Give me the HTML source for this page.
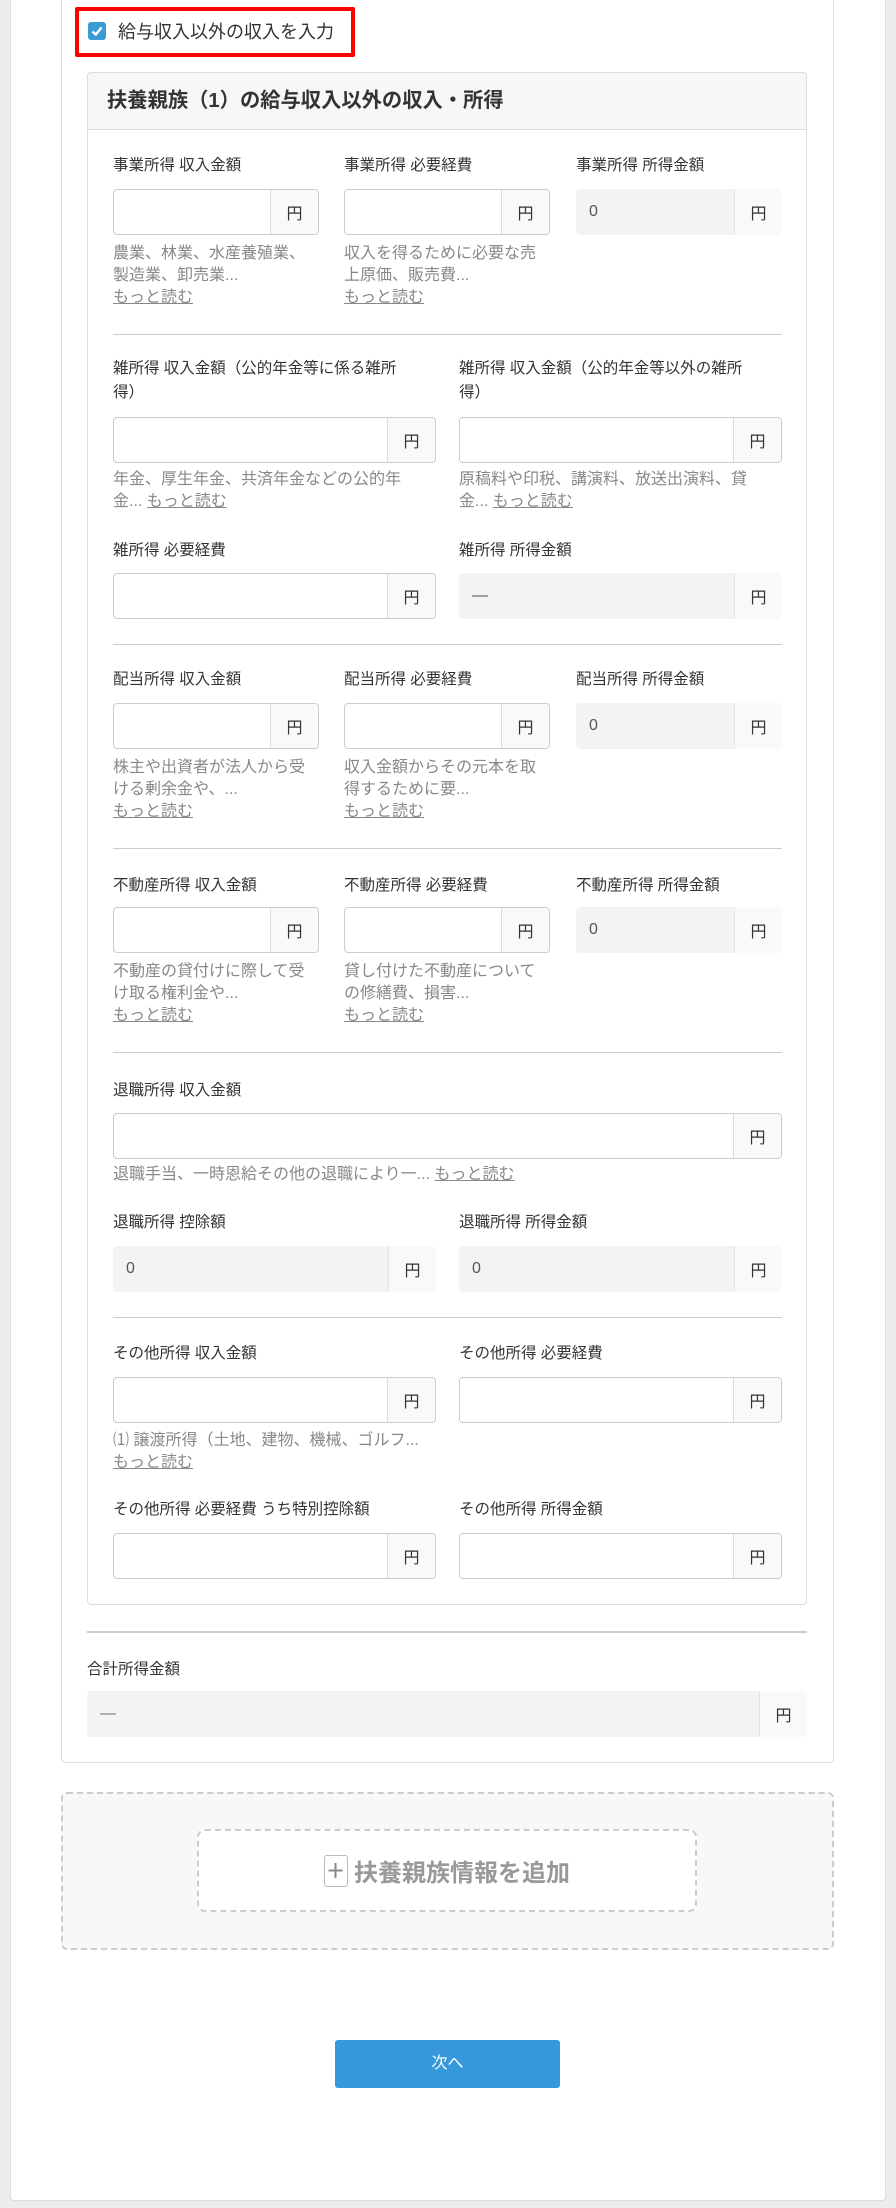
<!DOCTYPE html>
<html><head><meta charset="utf-8"><style>
*{box-sizing:border-box;margin:0;padding:0}
body{width:896px;height:2208px;background:#ececec;font-family:"Liberation Sans","Noto Sans CJK JP",sans-serif;position:relative;overflow:hidden;color:#333}
.a{position:absolute}
.card{left:10px;top:-5px;width:876px;height:2206px;background:#fff;border:1px solid #ddd;border-radius:4px}
.sec{left:61px;top:-10px;width:773px;height:1773px;border:1px solid #ddd;border-radius:4px;background:#fff}
.panel{left:87px;top:72px;width:720px;height:1533px;border:1px solid #ddd;border-radius:4px;background:#fff}
.ph{left:87px;top:72px;width:720px;height:58px;background:#f7f7f7;border:1px solid #ddd;border-radius:4px 4px 0 0}
.lb{font-size:15.5px;line-height:24px;color:#333}
.hp{font-size:16px;line-height:22px;color:#888}
.hp u{color:#888}
.f{height:46px;border:1px solid #ccc;border-radius:4px;background:#fff;overflow:hidden}
.f .ad{position:absolute;right:0;top:0;bottom:0;width:48px;background:#f9f9f9;border-left:1px solid #ddd;font-size:16px;display:flex;align-items:center;justify-content:center}
.f.r{border:none;background:#f3f3f3}
.f.r .ad{border-left:1px solid #e4e4e4;background:#f9f9f9}
.f .v{position:absolute;left:13px;top:0;line-height:46px;font-size:16px;color:#555}
.hr{height:1px;background:#ccc;left:113px;width:669px}
</style></head><body>
<div class="a card"></div>
<div class="a sec"></div>
<div class="a" style="left:75px;top:7px;width:280px;height:50px;border:4px solid #f00;border-radius:2px"></div>
<div class="a" style="left:88px;top:22px;width:18px;height:18px;background:#3a9bd5;border-radius:3px"><svg width="18" height="18" viewBox="0 0 18 18"><path d="M4.5 9.5 L7.8 12.5 L13.5 5.5" stroke="#fff" stroke-width="2.4" fill="none"/></svg></div>
<div class="a" style="left:118px;top:19px;font-size:18px;line-height:26px;color:#333">給与収入以外の収入を入力</div>
<div class="a panel"></div>
<div class="a ph"></div>
<div class="a" style="left:107px;top:87px;font-size:20.3px;line-height:28px;font-weight:bold;color:#333">扶養親族（1）の給与収入以外の収入・所得</div>

<!-- row1 -->
<div class="a lb" style="left:113px;top:154px">事業所得 収入金額</div>
<div class="a lb" style="left:344px;top:154px">事業所得 必要経費</div>
<div class="a lb" style="left:576px;top:154px">事業所得 所得金額</div>
<div class="a f" style="left:113px;top:189px;width:206px"><div class="ad">円</div></div>
<div class="a f" style="left:344px;top:189px;width:206px"><div class="ad">円</div></div>
<div class="a f r" style="left:576px;top:189px;width:206px"><div class="v">0</div><div class="ad">円</div></div>
<div class="a hp" style="left:113px;top:243px;width:215px">農業、林業、水産養殖業、<br>製造業、卸売業...<br><u>もっと読む</u></div>
<div class="a hp" style="left:344px;top:243px;width:215px">収入を得るために必要な売<br>上原価、販売費...<br><u>もっと読む</u></div>
<div class="a hr" style="top:334px"></div>

<!-- row2 -->
<div class="a lb" style="left:113px;top:357px;width:340px">雑所得 収入金額（公的年金等に係る雑所<br>得）</div>
<div class="a lb" style="left:459px;top:357px;width:340px">雑所得 収入金額（公的年金等以外の雑所<br>得）</div>
<div class="a f" style="left:113px;top:417px;width:323px"><div class="ad">円</div></div>
<div class="a f" style="left:459px;top:417px;width:323px"><div class="ad">円</div></div>
<div class="a hp" style="left:113px;top:469px;width:340px">年金、厚生年金、共済年金などの公的年<br>金... <u>もっと読む</u></div>
<div class="a hp" style="left:459px;top:469px;width:340px">原稿料や印税、講演料、放送出演料、貸<br>金... <u>もっと読む</u></div>
<div class="a lb" style="left:113px;top:539px">雑所得 必要経費</div>
<div class="a lb" style="left:459px;top:539px">雑所得 所得金額</div>
<div class="a f" style="left:113px;top:573px;width:323px"><div class="ad">円</div></div>
<div class="a f r" style="left:459px;top:573px;width:323px"><div class="v">—</div><div class="ad">円</div></div>
<div class="a hr" style="top:644px"></div>

<!-- row3 -->
<div class="a lb" style="left:113px;top:668px">配当所得 収入金額</div>
<div class="a lb" style="left:344px;top:668px">配当所得 必要経費</div>
<div class="a lb" style="left:576px;top:668px">配当所得 所得金額</div>
<div class="a f" style="left:113px;top:703px;width:206px"><div class="ad">円</div></div>
<div class="a f" style="left:344px;top:703px;width:206px"><div class="ad">円</div></div>
<div class="a f r" style="left:576px;top:703px;width:206px"><div class="v">0</div><div class="ad">円</div></div>
<div class="a hp" style="left:113px;top:757px;width:215px">株主や出資者が法人から受<br>ける剰余金や、...<br><u>もっと読む</u></div>
<div class="a hp" style="left:344px;top:757px;width:215px">収入金額からその元本を取<br>得するために要...<br><u>もっと読む</u></div>
<div class="a hr" style="top:848px"></div>

<!-- row4 -->
<div class="a lb" style="left:113px;top:874px">不動産所得 収入金額</div>
<div class="a lb" style="left:344px;top:874px">不動産所得 必要経費</div>
<div class="a lb" style="left:576px;top:874px">不動産所得 所得金額</div>
<div class="a f" style="left:113px;top:907px;width:206px"><div class="ad">円</div></div>
<div class="a f" style="left:344px;top:907px;width:206px"><div class="ad">円</div></div>
<div class="a f r" style="left:576px;top:907px;width:206px"><div class="v">0</div><div class="ad">円</div></div>
<div class="a hp" style="left:113px;top:961px;width:215px">不動産の貸付けに際して受<br>け取る権利金や...<br><u>もっと読む</u></div>
<div class="a hp" style="left:344px;top:961px;width:215px">貸し付けた不動産について<br>の修繕費、損害...<br><u>もっと読む</u></div>
<div class="a hr" style="top:1052px"></div>

<!-- row5 -->
<div class="a lb" style="left:113px;top:1079px">退職所得 収入金額</div>
<div class="a f" style="left:113px;top:1113px;width:669px"><div class="ad">円</div></div>
<div class="a hp" style="left:113px;top:1164px">退職手当、一時恩給その他の退職により一... <u>もっと読む</u></div>
<div class="a lb" style="left:113px;top:1211px">退職所得 控除額</div>
<div class="a lb" style="left:459px;top:1211px">退職所得 所得金額</div>
<div class="a f r" style="left:113px;top:1246px;width:323px"><div class="v">0</div><div class="ad">円</div></div>
<div class="a f r" style="left:459px;top:1246px;width:323px"><div class="v">0</div><div class="ad">円</div></div>
<div class="a hr" style="top:1317px"></div>

<!-- row6 -->
<div class="a lb" style="left:113px;top:1342px">その他所得 収入金額</div>
<div class="a lb" style="left:459px;top:1342px">その他所得 必要経費</div>
<div class="a f" style="left:113px;top:1377px;width:323px"><div class="ad">円</div></div>
<div class="a f" style="left:459px;top:1377px;width:323px"><div class="ad">円</div></div>
<div class="a hp" style="left:113px;top:1430px;width:340px">⑴ 譲渡所得（土地、建物、機械、ゴルフ...<br><u>もっと読む</u></div>
<div class="a lb" style="left:113px;top:1498px">その他所得 必要経費 うち特別控除額</div>
<div class="a lb" style="left:459px;top:1498px">その他所得 所得金額</div>
<div class="a f" style="left:113px;top:1533px;width:323px"><div class="ad">円</div></div>
<div class="a f" style="left:459px;top:1533px;width:323px"><div class="ad">円</div></div>

<div class="a" style="left:87px;top:1631px;width:720px;height:2px;background:#ccc"></div>
<div class="a lb" style="left:87px;top:1658px">合計所得金額</div>
<div class="a f r" style="left:87px;top:1691px;width:720px"><div class="v" style="color:#777">—</div><div class="ad">円</div></div>

<div class="a" style="left:61px;top:1792px;width:773px;height:158px;background:#f8f8f8;border:2px dashed #ccc;border-radius:6px"></div>
<div class="a" style="left:197px;top:1829px;width:500px;height:83px;background:#fff;border:2px dashed #ccc;border-radius:8px;display:flex;align-items:center;justify-content:center;color:#999;font-size:24px;font-weight:bold">
<span style="display:inline-block;width:24px;height:32px;border:1.5px solid #bbb;border-radius:3px;position:relative;margin-right:6px"><svg width="21" height="29" viewBox="0 0 21 29" style="position:absolute;left:0;top:0"><path d="M10.5 7 V22 M3.5 14.5 H17.5" stroke="#888" stroke-width="2" fill="none"/></svg></span>扶養親族情報を追加</div>

<div class="a" style="left:335px;top:2040px;width:225px;height:48px;background:#3799db;border-radius:3px;color:#fff;font-size:16px;line-height:48px;text-align:center">次へ</div>
</body></html>
